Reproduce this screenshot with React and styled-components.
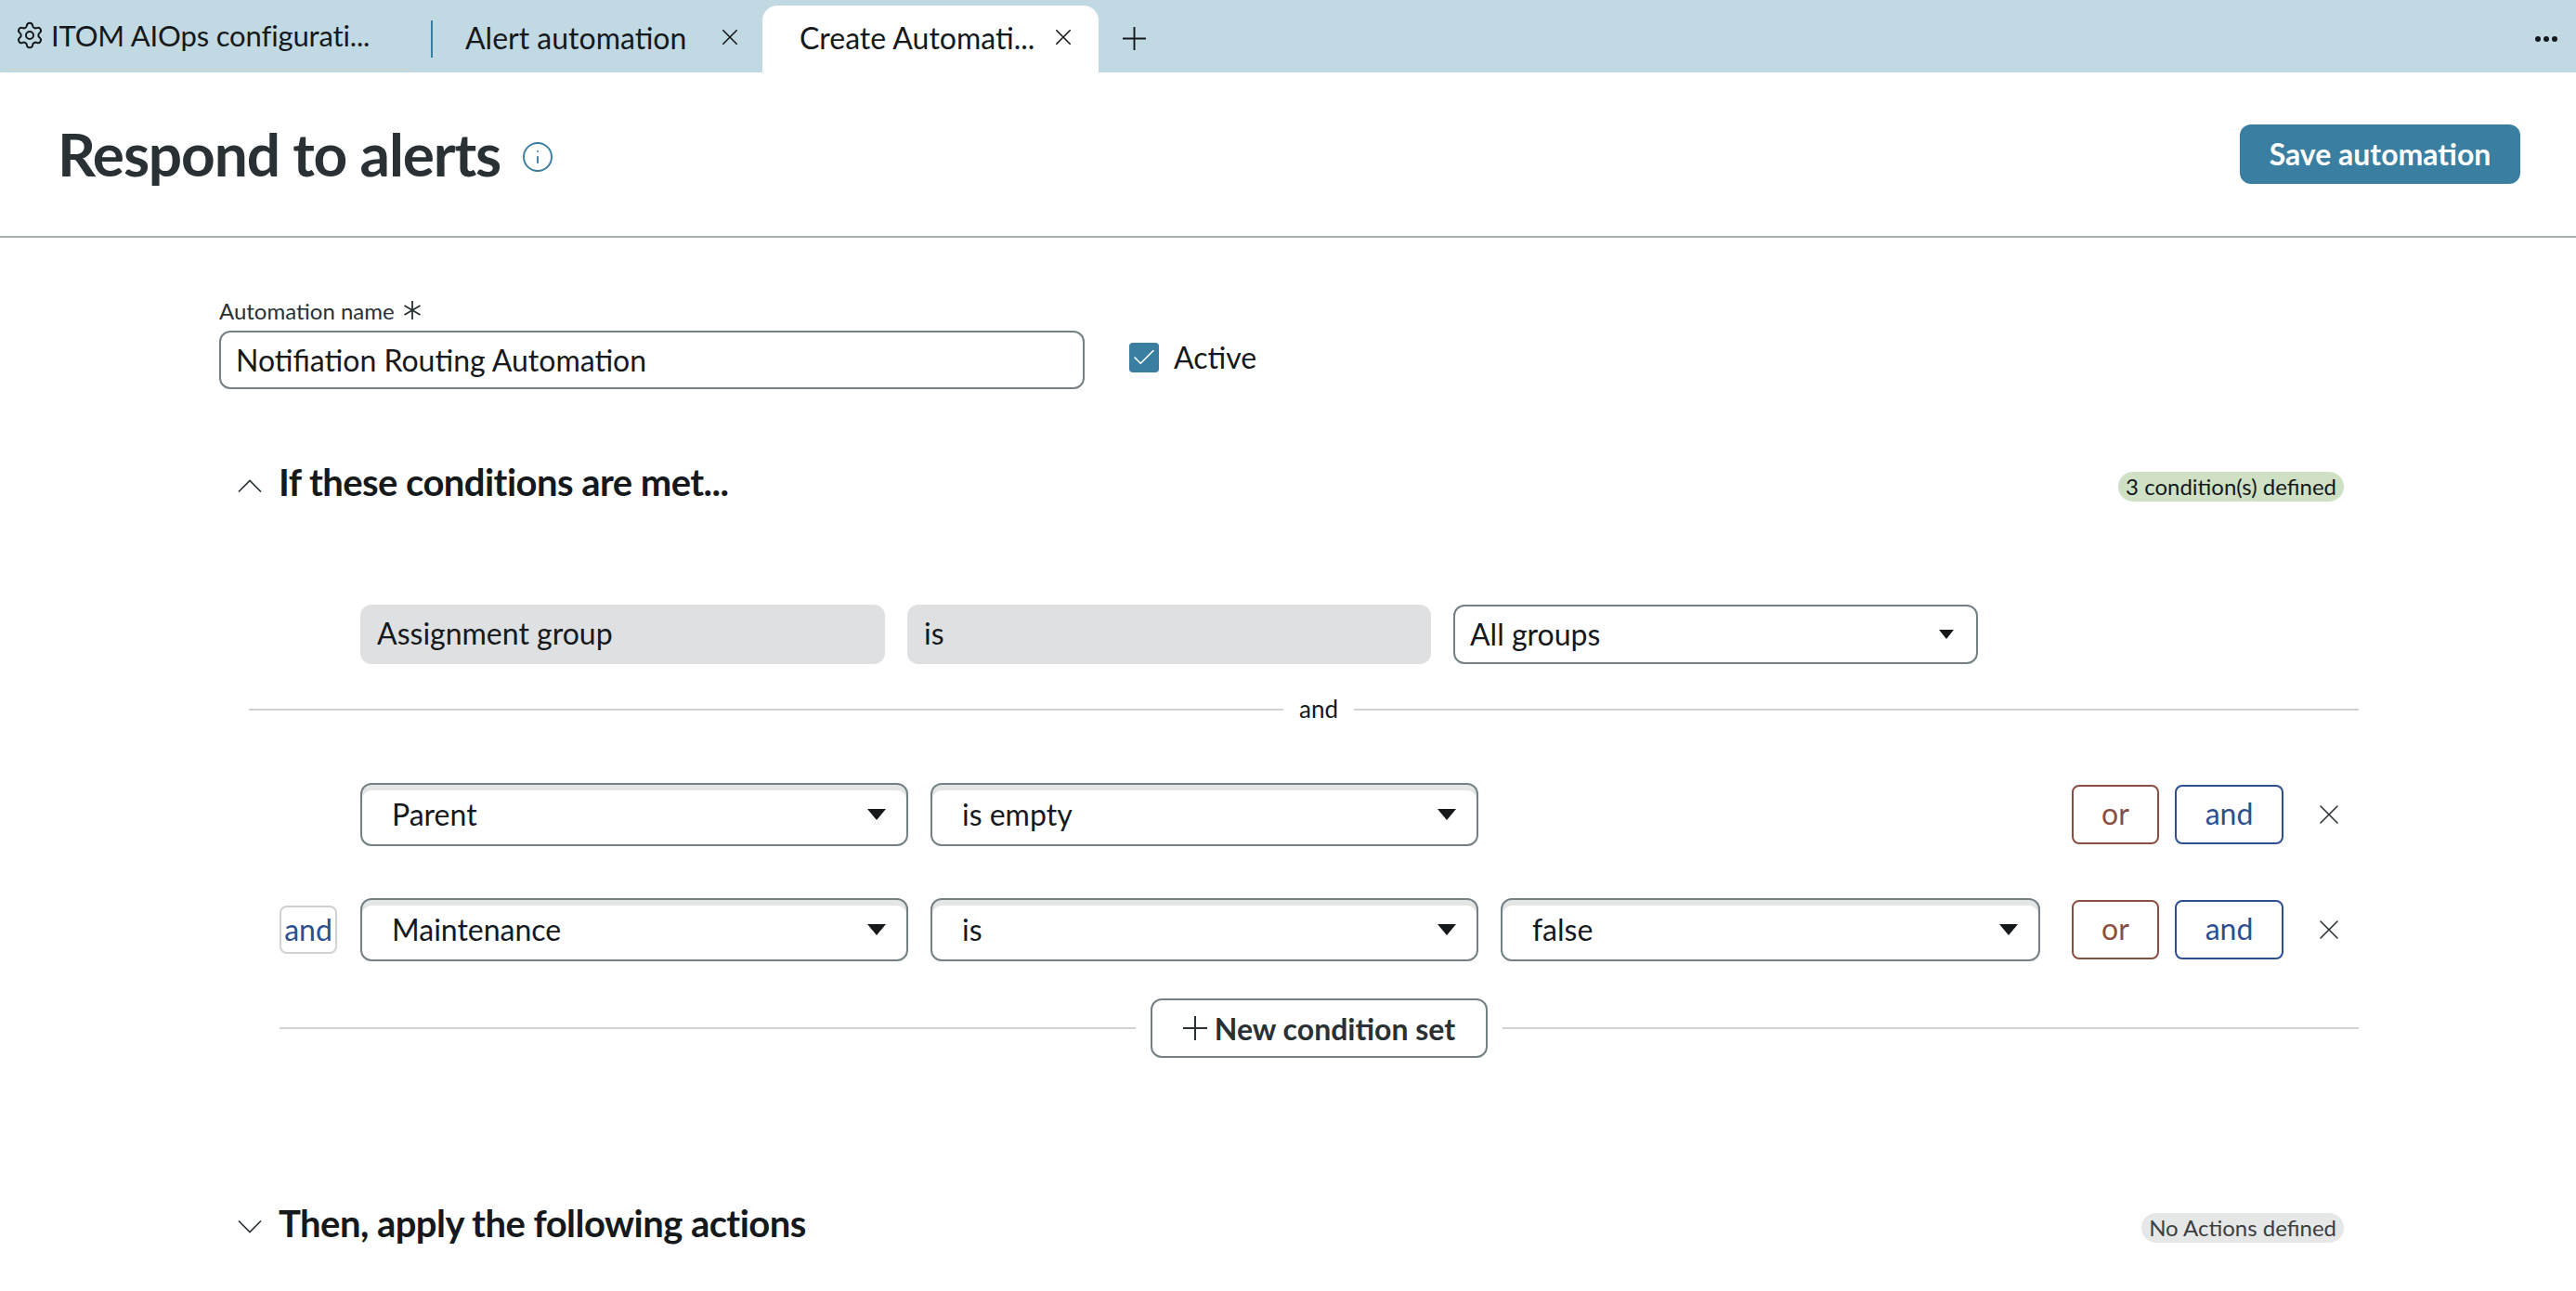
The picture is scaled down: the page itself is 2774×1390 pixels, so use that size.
import React from 'react';
import styled, { createGlobalStyle } from 'styled-components';
import { Settings, Info, Check } from 'lucide-react';

const GlobalStyle = createGlobalStyle`
  html, body {
    margin: 0;
    padding: 0;
    background: #fff;
  }
  body {
    font-family: Lato, "Open Sans", sans-serif;
    color: #15191c;
  }
  * { box-sizing: border-box; }
`;

const TabBar = styled.div`
  height: 78px;
  background: #c1d9e3;
  display: flex;
  align-items: stretch;
  padding-left: 18px;
  padding-top: 6px;
`;

const FirstTab = styled.div`
  width: 432px;
  margin-left: -9px;
  padding: 0 0 4px 7px;
  display: flex;
  align-items: center;
  gap: 7px;
  font-size: 31px;
  letter-spacing: -0.15px;
  border-bottom: 2px solid #cbd5d8;
  height: 70px;
`;

const TabSeparator = styled.div`
  width: 2px;
  height: 40px;
  background: #3a7ea1;
  margin: 16px 0 0 23px;
`;

const Tab = styled.div`
  display: flex;
  align-items: center;
  font-size: 32px;
  padding-bottom: 4px;
  height: 72px;
  width: ${p => p.$width}px;
  padding-left: ${p => p.$pad}px;
  background: ${p => (p.$active ? '#fff' : 'transparent')};
  border-radius: 16px 16px 0 0;
`;

const TabLabel = styled.span`
  white-space: nowrap;
  width: ${p => p.$width}px;
`;

const AddTab = styled.div`
  display: flex;
  align-items: center;
  margin-left: 26px;
  height: 70px;
`;

const MoreDots = styled.div`
  margin-left: auto;
  margin-right: 20px;
  height: 72px;
  display: flex;
  align-items: center;
  gap: 3px;
  span {
    width: 6px;
    height: 6px;
    border-radius: 50%;
    background: #15191c;
  }
`;

const PageHeader = styled.header`
  height: 178px;
  border-bottom: 2px solid #aaafb2;
  display: flex;
  align-items: center;
  padding: 0 60px 0 62px;
`;

const Title = styled.h1`
  margin: -2px 0 0;
  font-size: 64px;
  font-weight: 700;
  color: #293135;
  letter-spacing: -1.15px;
`;

const InfoIcon = styled(Info)`
  margin-left: 22px;
  margin-top: 5px;
  color: #3a7ea1;
`;

const SaveButton = styled.button`
  margin-left: auto;
  width: 302px;
  height: 64px;
  margin-top: 0;
  padding: 0 0 2px;
  border: 0;
  border-radius: 12px;
  background: #3a7ea1;
  color: #fff;
  font: 700 32px Lato, sans-serif;
`;

const Main = styled.main`
  padding: 64px 234px 0 236px;
`;

const NameRow = styled.div`
  display: flex;
  align-items: flex-end;
`;

const NameField = styled.div`
  width: 932px;
`;

const Label = styled.label`
  display: flex;
  align-items: center;
  gap: 8px;
  height: 36px;
  padding-bottom: 8px;
  font-size: 24px;
  color: #293135;
`;

const NameInput = styled.div`
  height: 63px;
  border: 2px solid #748184;
  border-radius: 12px;
  padding: 0 16px;
  display: flex;
  align-items: center;
  font-size: 32px;
`;

const ActiveField = styled.div`
  display: flex;
  align-items: center;
  gap: 16px;
  height: 63px;
  margin: 0 0 3px 48px;
  font-size: 32px;
`;

const CheckBox = styled.span`
  width: 32px;
  height: 32px;
  border-radius: 4px;
  background: #3a7ea1;
  display: flex;
  align-items: center;
  justify-content: center;
  color: #fff;
`;

const SectionHeader = styled.div`
  display: flex;
  align-items: center;
  height: 50px;
  margin-top: ${p => p.$top}px;
  padding: 0 16px 0 20px;
`;

const Toggle = styled.span`
  width: 44px;
  display: flex;
  margin-top: 8px;
  color: #293135;
`;

const SectionTitle = styled.h2`
  margin: 0;
  font-size: 40px;
  font-weight: 700;
  letter-spacing: -0.55px;
`;

const Badge = styled.span`
  margin-left: auto;
  margin-top: 9px;
  height: 32px;
  padding: 0 8px;
  border-radius: 16px;
  display: flex;
  align-items: center;
  font-size: 24px;
  background: ${p => (p.$tone === 'green' ? '#cfe0c5' : '#e6e8e8')};
  color: ${p => (p.$tone === 'green' ? '#15191c' : '#3a3f42')};
`;

const Conditions = styled.div`
  padding: 0 16px 0 65px;
  margin-top: 107px;
`;

const Row = styled.div`
  display: flex;
  align-items: center;
  height: ${p => p.$height}px;
  margin-top: ${p => p.$top || 0}px;
`;

const FixedRow = styled(Row)`
  margin-left: 87px;
  gap: 24px;
`;

const ReadOnlyBox = styled.div`
  width: ${p => p.$width}px;
  height: 64px;
  border-radius: 12px;
  background: #dee0e2;
  padding: 0 18px 3px;
  display: flex;
  align-items: center;
  font-size: 32px;
`;

const Select = styled.div`
  position: relative;
  width: ${p => p.$width}px;
  height: ${p => p.$height}px;
  padding: 0 ${p => p.$pad}px 2px;
  border: 2px solid #748184;
  border-radius: 12px;
  display: flex;
  align-items: center;
  font-size: 32px;
  box-shadow: ${p => (p.$raised ? 'inset 0 6px 0 #e4e5e5' : 'none')};
`;

const Caret = styled.span`
  position: absolute;
  right: ${p => p.$right}px;
  top: 50%;
  margin-top: -${p => p.$size / 2}px;
  border-left: ${p => p.$size * 0.85}px solid transparent;
  border-right: ${p => p.$size * 0.85}px solid transparent;
  border-top: ${p => p.$size}px solid #15191c;
`;

const Divider = styled.div`
  display: flex;
  align-items: center;
  gap: 17px;
  margin: ${p => p.$top}px -16px 0 ${p => p.$left}px;
  height: 32px;
  font-size: 26px;
  span {
    margin-bottom: 2px;
  }
  &::before, &::after {
    content: '';
    height: 2px;
    background: #cfd3d6;
  }
  &::before {
    width: 1114px;
  }
  &::after {
    flex: 1;
  }
`;

const AndSlot = styled.div`
  width: 62px;
  height: 52px;
  margin-right: 25px;
  flex: none;
`;

const AndTag = styled(AndSlot)`
  border: 2px solid #cfd3d6;
  border-radius: 8px;
  color: #2d4f92;
  font-size: 32px;
  padding-bottom: 2px;
  display: flex;
  align-items: center;
  justify-content: center;
`;

const SelectGroup = styled.div`
  display: flex;
  gap: 24px;
`;

const RowActions = styled.div`
  margin-left: auto;
  padding-right: 6px;
  display: flex;
  align-items: center;
  gap: 17px;
`;

const LogicButton = styled.button`
  height: 64px;
  width: ${p => p.$width}px;
  border: 2px solid ${p => p.$color};
  border-radius: 8px;
  background: #fff;
  color: ${p => p.$color};
  font: 400 32px Lato, sans-serif;
  padding: 0 0 3px;
`;

const RemoveButton = styled.span`
  display: flex;
  margin-left: 22px;
  color: #293135;
`;

const AddSetRow = styled.div`
  display: flex;
  align-items: center;
  gap: 16px;
  margin: 40px -16px 0 0;
  &::before, &::after {
    content: '';
    flex: 1;
    height: 2px;
    background: #cfd3d6;
  }
`;

const AddSetButton = styled.button`
  width: 363px;
  height: 64px;
  border: 2px solid #748184;
  border-radius: 12px;
  background: #fff;
  color: #293135;
  display: flex;
  align-items: center;
  justify-content: center;
  gap: 8px;
  font: 700 32px Lato, sans-serif;
  padding: 0;
`;

// thin line glyphs, lucide's are too heavy at this scale
const CrossIcon = ({ size, width = 1.6 }) => (
  <svg width={size} height={size} viewBox="0 0 20 20" fill="none" stroke="currentColor" strokeWidth={width} strokeLinecap="round">
    <path d="M1 1l18 18M19 1L1 19" />
  </svg>
);

const PlusIcon = ({ size, width = 2 }) => (
  <svg width={size} height={size} viewBox="0 0 26 26" fill="none" stroke="currentColor" strokeWidth={width}>
    <path d="M13 0v26M0 13h26" />
  </svg>
);

const ChevronIcon = ({ up }) => (
  <svg width="26" height="14" viewBox="0 0 26 14" fill="none" stroke="currentColor" strokeWidth="1.6">
    <path d={up ? 'M1 13.5 13 1.5l12 12' : 'M1 .5l12 12 12-12'} />
  </svg>
);

const RequiredMark = () => (
  <svg width="22" height="22" viewBox="0 0 22 22" fill="none" stroke="#293135" strokeWidth="1.8">
    <path d="M11 1v20M2.5 6l17 10M19.5 6l-17 10" />
  </svg>
);

const conditionRows = [
  { fields: ['Parent', 'is empty'], joined: false },
  { fields: ['Maintenance', 'is', 'false'], joined: true },
];

const ConditionSelect = ({ label, index }) => (
  <Select $raised $width={index === 2 ? 581 : 590} $height={68} $pad={32}>
    {label}
    <Caret $right={22} $size={12} />
  </Select>
);

export default function App() {
  return (
    <>
      <GlobalStyle />
      <TabBar>
        <FirstTab>
          <Settings size={32} strokeWidth={1.5} />
          ITOM AIOps configurati...
        </FirstTab>
        <TabSeparator />
        <Tab $width={355} $pad={35}>
          <TabLabel $width={277}>Alert automation</TabLabel>
          <CrossIcon size={16} width={2} />
        </Tab>
        <Tab $active $width={362} $pad={40}>
          <TabLabel $width={276}>Create Automati...</TabLabel>
          <CrossIcon size={16} width={2} />
        </Tab>
        <AddTab>
          <PlusIcon size={25} />
        </AddTab>
        <MoreDots><span /><span /><span /></MoreDots>
      </TabBar>

      <PageHeader>
        <Title>Respond to alerts</Title>
        <InfoIcon size={36} strokeWidth={1.3} />
        <SaveButton>Save automation</SaveButton>
      </PageHeader>

      <Main>
        <NameRow>
          <NameField>
            <Label>
              Automation name
              <RequiredMark />
            </Label>
            <NameInput>Notifiation Routing Automation</NameInput>
          </NameField>
          <ActiveField>
            <CheckBox><Check size={30} strokeWidth={1.3} /></CheckBox>
            Active
          </ActiveField>
        </NameRow>

        <SectionHeader $top={75}>
          <Toggle><ChevronIcon up /></Toggle>
          <SectionTitle>If these conditions are met...</SectionTitle>
          <Badge $tone="green">3 condition(s) defined</Badge>
        </SectionHeader>

        <Conditions>
          <FixedRow $height={64}>
            <ReadOnlyBox $width={565}>Assignment group</ReadOnlyBox>
            <ReadOnlyBox $width={564}>is</ReadOnlyBox>
            <Select $width={565} $height={64} $pad={16}>
              All groups
              <Caret $right={24} $size={10} />
            </Select>
          </FixedRow>

          <Divider $top={33} $left={-33}><span>and</span></Divider>

          {conditionRows.map((row, i) => (
            <Row key={row.fields[0]} $height={68} $top={i === 0 ? 63 : 56}>
              {row.joined ? <AndTag>and</AndTag> : <AndSlot />}
              <SelectGroup>
                {row.fields.map((field, index) => (
                  <ConditionSelect key={field} label={field} index={index} />
                ))}
              </SelectGroup>
              <RowActions>
                <LogicButton $width={94} $color="#8a4f43">or</LogicButton>
                <LogicButton $width={117} $color="#2d4f92">and</LogicButton>
                <RemoveButton><CrossIcon size={20} /></RemoveButton>
              </RowActions>
            </Row>
          ))}

          <AddSetRow>
            <AddSetButton>
              <PlusIcon size={26} />
              New condition set
            </AddSetButton>
          </AddSetRow>
        </Conditions>

        <SectionHeader $top={153}>
          <Toggle><ChevronIcon /></Toggle>
          <SectionTitle>Then, apply the following actions</SectionTitle>
          <Badge $tone="grey">No Actions defined</Badge>
        </SectionHeader>
      </Main>
    </>
  );
}
